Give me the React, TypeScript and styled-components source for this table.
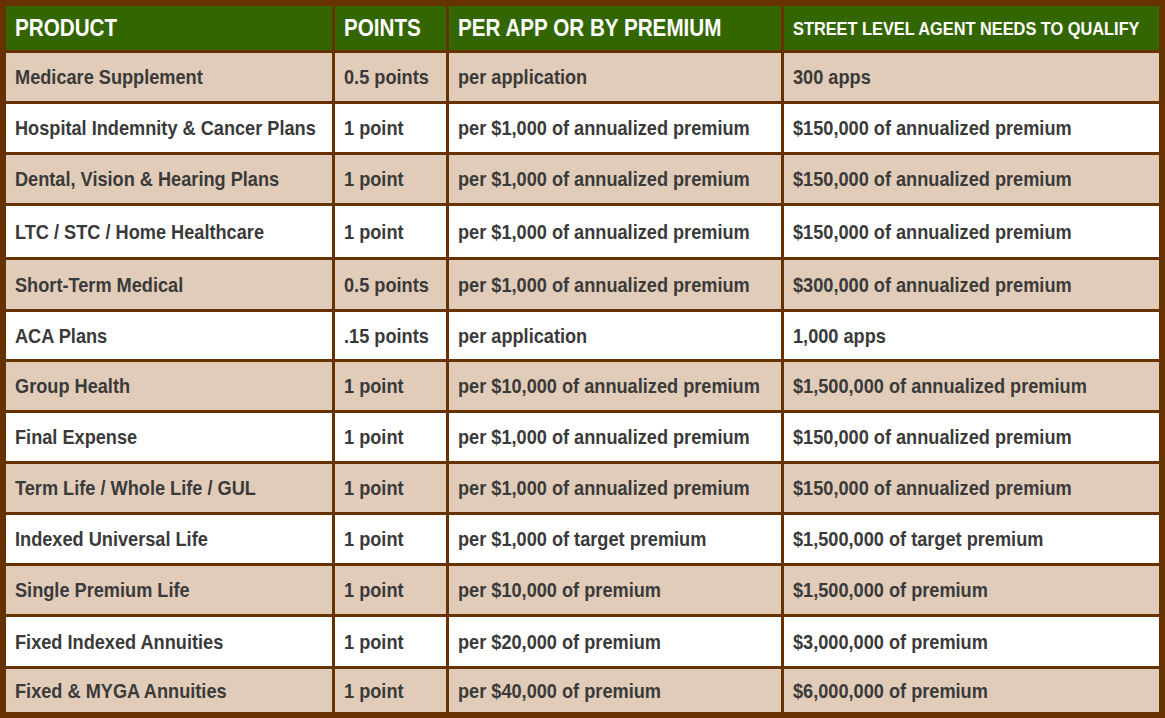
import React from "react";
import styled, { createGlobalStyle } from "styled-components";

const GlobalStyle = createGlobalStyle`
  html, body {
    margin: 0;
    padding: 0;
    background: #ffffff;
  }
  body {
    font-family: "Liberation Sans", Arial, sans-serif;
  }
`;

const Table = styled.div`
  display: grid;
  grid-template-columns: 326px 111px 332px 375px;
  grid-template-rows: 44px 48px 48px 48px 51px 49px 47px 48px 48px 48px 48px 48px 49px 43px;
  gap: 3px;
  padding: 6px;
  width: 1165px;
  height: 718px;
  box-sizing: border-box;
  background: #663300;
`;

const HeadCell = styled.div`
  background: #336600;
  display: flex;
  align-items: center;
  padding-left: 9px;
  overflow: hidden;
`;

const HeadText = styled.span<{ $size: number }>`
  display: inline-block;
  white-space: nowrap;
  color: #ffffff;
  font-weight: 700;
  font-size: ${(p) => p.$size}px;
  line-height: 1;
  transform: scaleX(0.86);
  transform-origin: left center;
`;

const Cell = styled.div<{ $shaded: boolean }>`
  background: ${(p) => (p.$shaded ? "#e1ccb9" : "#ffffff")};
  display: flex;
  align-items: center;
  padding-left: 9px;
  padding-bottom: 1px;
  box-sizing: border-box;
  overflow: hidden;
`;

const CellText = styled.span`
  display: inline-block;
  white-space: nowrap;
  color: #3a3a3a;
  font-weight: 700;
  font-size: 21px;
  line-height: 1;
  transform: scaleX(0.865);
  transform-origin: left center;
`;

const headers: { label: string; size: number }[] = [
  { label: "PRODUCT", size: 24 },
  { label: "POINTS", size: 24 },
  { label: "PER APP OR BY PREMIUM", size: 24 },
  { label: "STREET LEVEL AGENT NEEDS TO QUALIFY", size: 19 },
];

const rows: string[][] = [
  ["Medicare Supplement", "0.5 points", "per application", "300 apps"],
  ["Hospital Indemnity & Cancer Plans", "1 point", "per $1,000 of annualized premium", "$150,000 of annualized premium"],
  ["Dental, Vision & Hearing Plans", "1 point", "per $1,000 of annualized premium", "$150,000 of annualized premium"],
  ["LTC / STC / Home Healthcare", "1 point", "per $1,000 of annualized premium", "$150,000 of annualized premium"],
  ["Short-Term Medical", "0.5 points", "per $1,000 of annualized premium", "$300,000 of annualized premium"],
  ["ACA Plans", ".15 points", "per application", "1,000 apps"],
  ["Group Health", "1 point", "per $10,000 of annualized premium", "$1,500,000 of annualized premium"],
  ["Final Expense", "1 point", "per $1,000 of annualized premium", "$150,000 of annualized premium"],
  ["Term Life / Whole Life / GUL", "1 point", "per $1,000 of annualized premium", "$150,000 of annualized premium"],
  ["Indexed Universal Life", "1 point", "per $1,000 of target premium", "$1,500,000 of target premium"],
  ["Single Premium Life", "1 point", "per $10,000 of premium", "$1,500,000 of premium"],
  ["Fixed Indexed Annuities", "1 point", "per $20,000 of premium", "$3,000,000 of premium"],
  ["Fixed & MYGA Annuities", "1 point", "per $40,000 of premium", "$6,000,000 of premium"],
];

export default function App() {
  return (
    <>
      <GlobalStyle />
      <Table role="table">
        {headers.map((h) => (
          <HeadCell key={h.label} role="columnheader">
            <HeadText $size={h.size}>{h.label}</HeadText>
          </HeadCell>
        ))}
        {rows.map((row, i) =>
          row.map((text, j) => (
            <Cell key={`${i}-${j}`} $shaded={i % 2 === 0} role="cell">
              <CellText>{text}</CellText>
            </Cell>
          ))
        )}
      </Table>
    </>
  );
}
